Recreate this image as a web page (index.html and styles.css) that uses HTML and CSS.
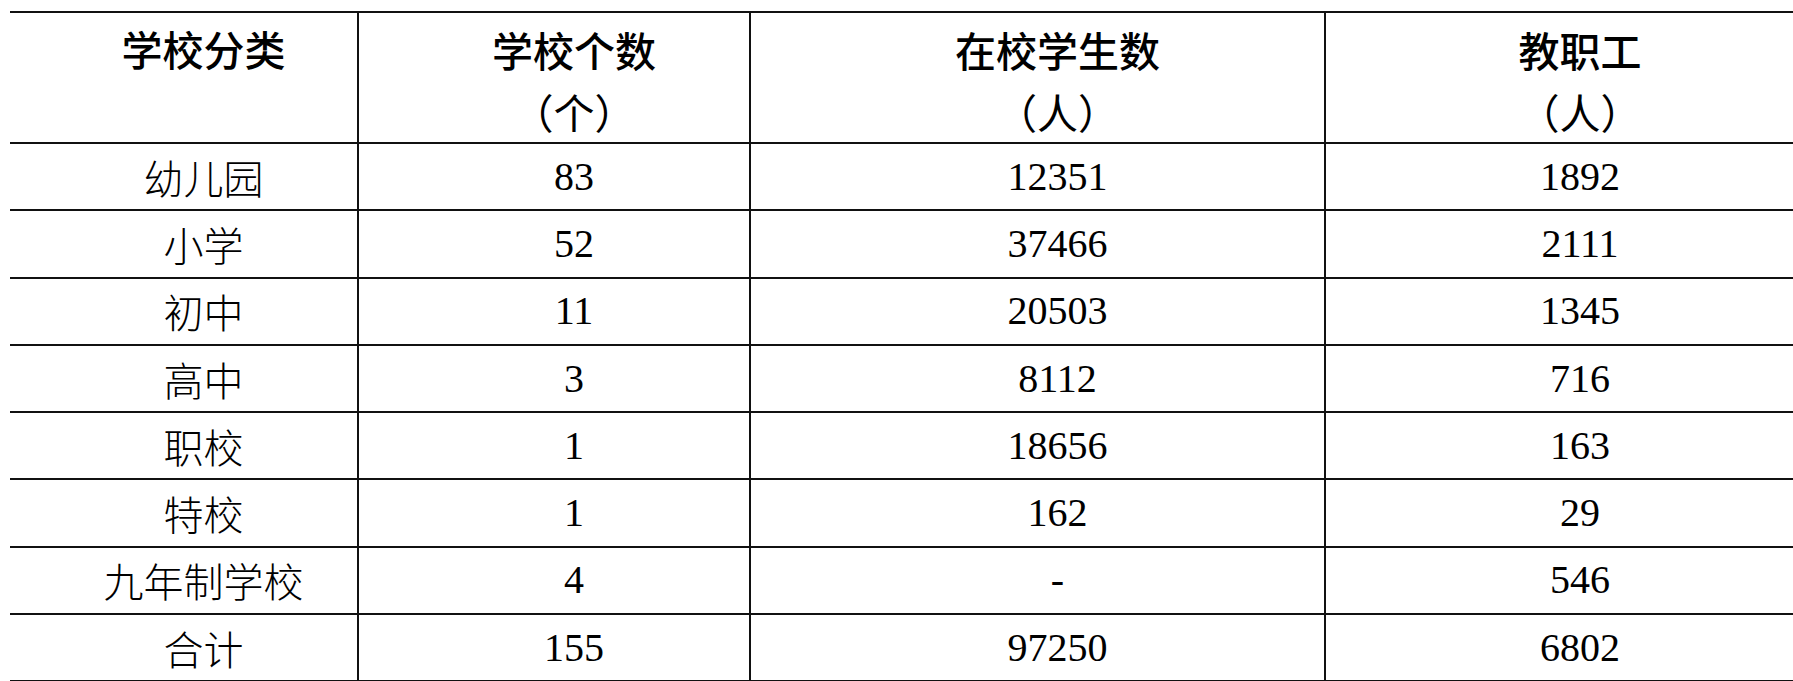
FILE: index.html
```html
<!DOCTYPE html>
<html lang="zh-CN">
<head>
<meta charset="utf-8">
<title>学校统计</title>
<link rel="stylesheet" href="styles.css">
</head>
<body>
<table class="stats">
  <colgroup>
    <col class="c1"><col class="c2"><col class="c3"><col class="c4">
  </colgroup>
  <thead>
    <tr>
      <th class="top">学校分类</th>
      <th>学校个数<br><span class="unit">（个）</span></th>
      <th>在校学生数<br><span class="unit">（人）</span></th>
      <th>教职工<br><span class="unit">（人）</span></th>
    </tr>
  </thead>
  <tbody>
    <tr><td>幼儿园</td><td>83</td><td>12351</td><td>1892</td></tr>
    <tr><td>小学</td><td>52</td><td>37466</td><td>2111</td></tr>
    <tr><td>初中</td><td>11</td><td>20503</td><td>1345</td></tr>
    <tr><td>高中</td><td>3</td><td>8112</td><td>716</td></tr>
    <tr><td>职校</td><td>1</td><td>18656</td><td>163</td></tr>
    <tr><td>特校</td><td>1</td><td>162</td><td>29</td></tr>
    <tr><td>九年制学校</td><td>4</td><td>-</td><td>546</td></tr>
    <tr><td>合计</td><td>155</td><td>97250</td><td>6802</td></tr>
  </tbody>
</table>
</body>
</html>
```

FILE: styles.css
```css
html, body {
  margin: 0;
  padding: 0;
  background: #fff;
  overflow: hidden;
}
body {
  width: 1793px;
  height: 681px;
}
.stats {
  border-collapse: collapse;
  table-layout: fixed;
  width: 1784px;
  margin: 11px 0 0 10px;
  color: #000;
}
.c1 { width: 348px; }
.c2 { width: 392px; }
.c3 { width: 575px; }
.c4 { width: 469px; }
.stats th,
.stats td {
  border: 2px solid #111;
  padding: 0 0 0 40px;
  text-align: center;
  vertical-align: middle;
}
.stats th:first-child,
.stats td:first-child {
  border-left: none;
}
.stats th:last-child,
.stats td:last-child {
  border-right: none;
}
.stats th {
  height: 123px;
  font-family: "Noto Sans CJK SC", sans-serif;
  font-weight: 500;
  font-size: 41px;
  line-height: 62px;
  padding-top: 5px;
}
.stats th.top {
  vertical-align: top;
  padding-top: 4px;
}
.stats th .unit {
  font-weight: 400;
}
.stats td {
  height: 65.3px;
  font-family: "Liberation Serif", serif;
  font-weight: 400;
  font-size: 40px;
  line-height: 46px;
}
.stats td:first-child {
  font-family: "Noto Sans CJK SC", sans-serif;
  font-weight: 300;
}
```
